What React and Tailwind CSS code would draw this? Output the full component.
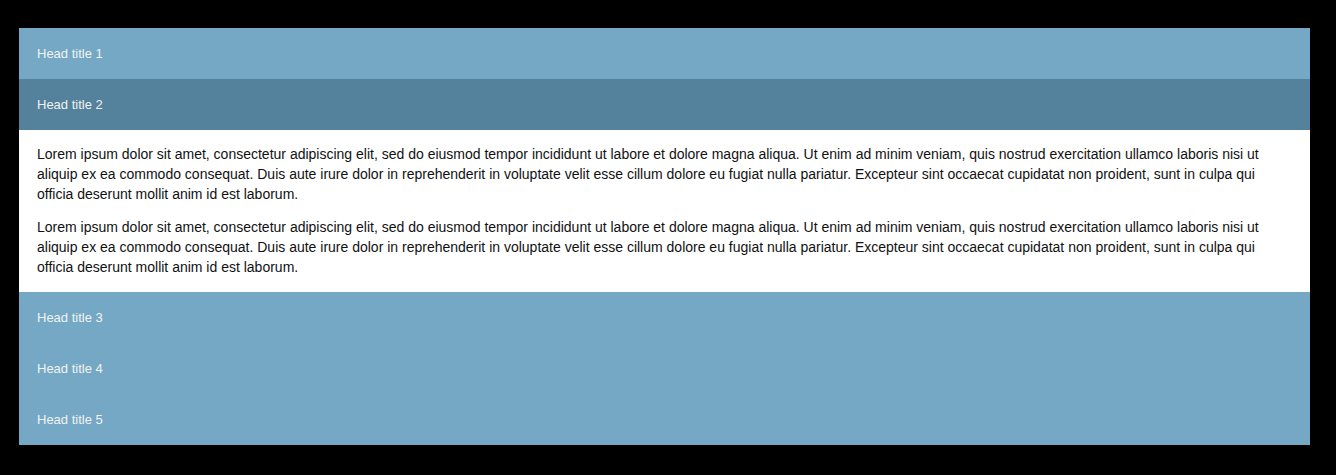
import React, { useState } from 'react';

const lorem =
  'Lorem ipsum dolor sit amet, consectetur adipiscing elit, sed do eiusmod tempor incididunt ut labore et dolore magna aliqua. Ut enim ad minim veniam, quis nostrud exercitation ullamco laboris nisi ut aliquip ex ea commodo consequat. Duis aute irure dolor in reprehenderit in voluptate velit esse cillum dolore eu fugiat nulla pariatur. Excepteur sint occaecat cupidatat non proident, sunt in culpa qui officia deserunt mollit anim id est laborum.';

const items = [1, 2, 3, 4, 5].map(n => ({ id: n, title: `Head title ${n}` }));

const App = () => {
  const [open, setOpen] = useState(2);

  return (
    <div className="min-h-[475px] bg-black pt-[28px] pl-[19px] font-['Liberation_Sans',Arial,sans-serif]">
      <div className="w-[1291px]">
        {items.map(item => (
          <div key={item.id}>
            <button
              onClick={() => setOpen(open === item.id ? null : item.id)}
              className={`block w-full h-[51px] px-[18px] text-left text-[13px] text-[#f2f2f2] ${
                open === item.id ? 'bg-[#54819b]' : 'bg-[#74a8c4]'
              }`}
            >
              {item.title}
            </button>
            {open === item.id && (
              <div className="bg-white px-[18px] pt-[14px] pb-[15px] text-[14px] leading-[20px] text-[#111] space-y-[13px]">
                <p>{lorem}</p>
                <p>{lorem}</p>
              </div>
            )}
          </div>
        ))}
      </div>
    </div>
  );
};

export default App;
